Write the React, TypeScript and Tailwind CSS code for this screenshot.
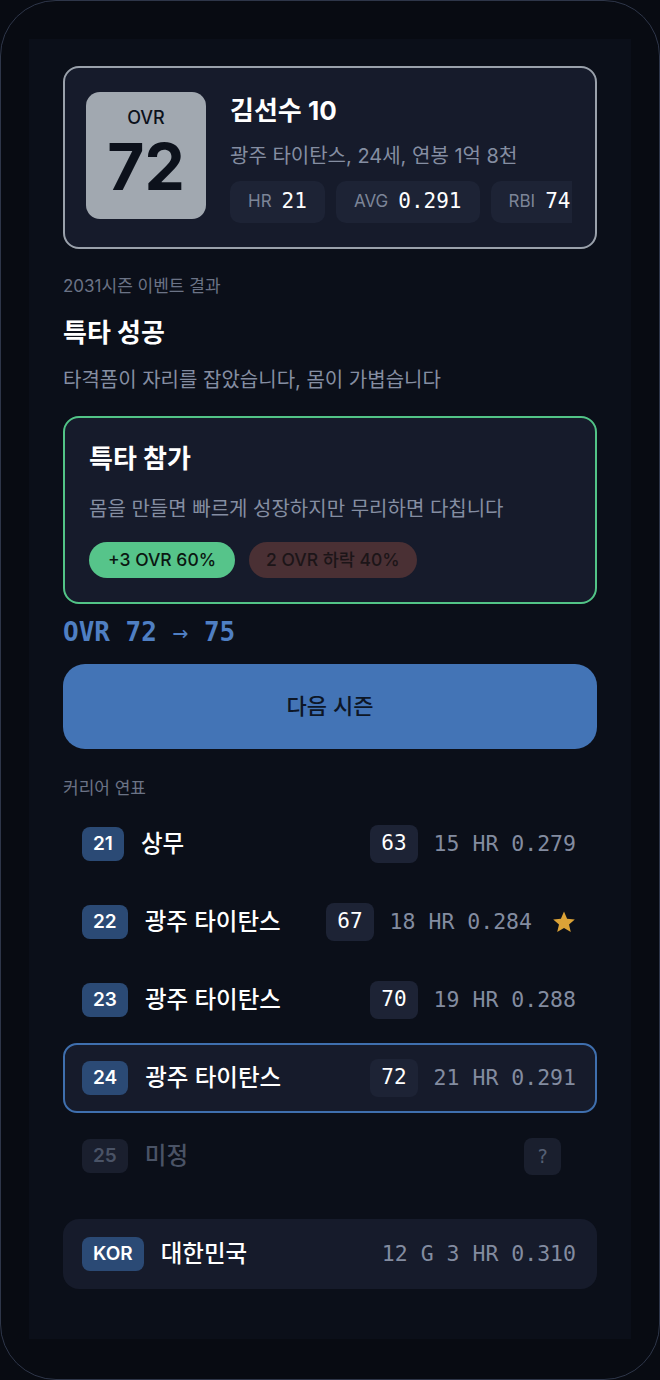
import React from "react";

const sans = "font-['Inter','Noto_Sans_CJK_KR',sans-serif]";
const mono = "font-['DejaVu_Sans_Mono','Noto_Sans_CJK_KR',monospace]";

type Season = {
  age: string;
  team: string;
  ovr?: string;
  stats?: string;
  star?: boolean;
  current?: boolean;
  pending?: boolean;
};

const seasons: Season[] = [
  { age: "21", team: "상무", ovr: "63", stats: "15 HR 0.279" },
  { age: "22", team: "광주 타이탄스", ovr: "67", stats: "18 HR 0.284", star: true },
  { age: "23", team: "광주 타이탄스", ovr: "70", stats: "19 HR 0.288" },
  { age: "24", team: "광주 타이탄스", ovr: "72", stats: "21 HR 0.291", current: true },
  { age: "25", team: "미정", pending: true },
];

function StatChip({ label, value }: { label: string; value: string }) {
  return (
    <div className="flex h-[42px] shrink-0 items-center gap-2.5 rounded-[10px] bg-[#1d2335] px-[18px]">
      <span className="text-[17px] text-[#7c8598]">{label}</span>
      <span className={`${mono} text-[21px] text-white`}>{value}</span>
    </div>
  );
}

function Star() {
  return (
    <svg width="24" height="24" viewBox="0 0 24 24" className="ml-1 shrink-0">
      <path
        d="M12 1.5l3.1 7.2 7.7.7-5.8 5.1 1.8 7.6L12 18.1l-6.8 4 1.8-7.6-5.8-5.1 7.7-.7z"
        fill="#dba237"
      />
    </svg>
  );
}

function SeasonRow({ s }: { s: Season }) {
  const frame = s.current
    ? "border-[#3f6fae] bg-[#161b2b]"
    : "border-transparent";
  return (
    <div className={`flex h-[70px] items-center rounded-[14px] border-2 pl-[17px] pr-[19px] ${frame}`}>
      <div
        className={`flex h-[34px] items-center rounded-[8px] px-[11px] text-[19px] font-semibold ${
          s.pending ? "bg-[#1a1f2e] text-[#4a5366]" : "bg-[#2b4a75] text-white"
        }`}
      >
        {s.age}
      </div>
      <div
        className={`ml-[17px] flex-1 text-[23.5px] font-medium ${
          s.pending ? "text-[#4a5366]" : "text-white"
        }`}
      >
        {s.team}
      </div>
      {s.pending ? (
        <div
          className={`${mono} mr-[15px] flex h-[37px] w-[37px] items-center justify-center rounded-[8px] bg-[#1a1f2e] text-[19px] text-[#566074]`}
        >
          ?
        </div>
      ) : (
        <div className="flex items-center gap-4">
          <div
            className={`${mono} flex h-[38px] items-center rounded-[8px] bg-[#1d2335] px-[11px] text-[21px] text-white`}
          >
            {s.ovr}
          </div>
          <span className={`${mono} text-[21.5px] text-[#838ca0]`}>{s.stats}</span>
          {s.star && <Star />}
        </div>
      )}
    </div>
  );
}

export default function App() {
  return (
    <div className={`${sans} bg-[#080b12]`}>
      <div className="h-[1380px] w-[660px] rounded-[56px] border-[1.5px] border-[#2e3649] bg-[#080b12] px-[28px] pt-[38px]">
        <div className="h-[1300px] bg-[#0b0f19] px-[34px] pt-[27px]">
          {/* player card */}
          <div className="flex rounded-[16px] border-2 border-[#9aa1ab] bg-[#161b2b] py-[24px] pl-[21px] pr-[23px]">
            <div className="flex h-[127px] w-[120px] shrink-0 flex-col items-center rounded-[14px] bg-[#a1a8b0] pt-[15px] text-[#0c111b]">
              <span className="text-[18px] font-medium leading-[22px]">OVR</span>
              <span className="mt-[6px] text-[64px] font-bold leading-[64px]">72</span>
            </div>
            <div className="ml-6 flex min-w-0 flex-1 flex-col pt-[2px]">
              <div className="text-[26px] font-bold leading-[34px] text-white">김선수 10</div>
              <div className="mt-[14px] text-[20px] leading-[28px] text-[#858ea2]">
                광주 타이탄스, 24세, 연봉 1억 8천
              </div>
              <div className="mt-[11px] flex gap-[11px] overflow-hidden">
                <StatChip label="HR" value="21" />
                <StatChip label="AVG" value="0.291" />
                <StatChip label="RBI" value="74" />
              </div>
            </div>
          </div>

          {/* event result */}
          <div className="mt-[26px] text-[17px] leading-[22px] text-[#6b7386]">2031시즌 이벤트 결과</div>
          <div className="mt-[19px] text-[26px] font-bold leading-[34px] text-white">특타 성공</div>
          <div className="mt-[16px] text-[20px] leading-[28px] text-[#858ea2]">
            타격폼이 자리를 잡았습니다, 몸이 가볍습니다
          </div>

          <div className="mt-[22px] rounded-[16px] border-2 border-[#52c487] bg-[#161b2b] px-[24px] pb-[24px] pt-[24px]">
            <div className="text-[26px] font-bold leading-[34px] text-white">특타 참가</div>
            <div className="mt-[19px] text-[20px] leading-[28px] text-[#858ea2]">
              몸을 만들면 빠르게 성장하지만 무리하면 다칩니다
            </div>
            <div className="mt-[19px] flex gap-[14px]">
              <span className="flex h-[36px] items-center rounded-full bg-[#56c48a] px-[19px] text-[17.5px] font-medium text-[#0b1711]">
                +3 OVR 60%
              </span>
              <span className="flex h-[36px] items-center rounded-full bg-[#4a3034] px-[17px] text-[17.5px] font-medium text-[#1c1518]">
                2 OVR 하락 40%
              </span>
            </div>
          </div>

          <div className={`${mono} mt-[12px] text-[26px] font-bold leading-[32px] text-[#4f7fc3]`}>
            OVR 72 <span className="font-normal">→</span> 75
          </div>

          <button className="mt-[16px] flex h-[85px] w-full items-center justify-center rounded-[22px] bg-[#4374b6] text-[22px] font-medium text-[#0d1626]">
            다음 시즌
          </button>

          <div className="mt-[28px] text-[17px] leading-[22px] text-[#6b7386]">커리어 연표</div>

          <div className="mt-[10px] flex flex-col gap-2">
            {seasons.map((s) => (
              <SeasonRow key={s.age} s={s} />
            ))}
          </div>

          {/* national team */}
          <div className="mt-[28px] flex h-[70px] items-center rounded-[16px] bg-[#161b2b] pl-[19px] pr-[21px]">
            <div className="flex h-[34px] items-center rounded-[8px] bg-[#2b4a75] px-[11px] text-[19px] font-semibold text-white">
              KOR
            </div>
            <div className="ml-[17px] flex-1 text-[23.5px] font-medium text-white">대한민국</div>
            <span className={`${mono} text-[21.5px] text-[#838ca0]`}>12 G 3 HR 0.310</span>
          </div>
        </div>
      </div>
    </div>
  );
}
